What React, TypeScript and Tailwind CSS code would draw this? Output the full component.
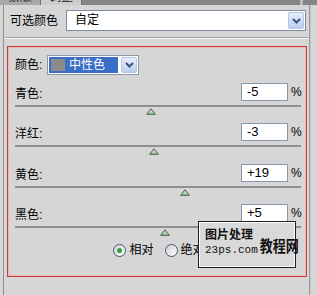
import React from 'react';

const rows = [
  { label: '青色:', value: -5, extra: '' },
  { label: '洋红:', value: -3, extra: '' },
  { label: '黄色:', value: 19, extra: 'mt-px' },
  { label: '黑色:', value: 5, extra: '' },
];

function Chevron() {
  return (
    <svg width="9" height="6" viewBox="0 0 9 6">
      <polyline points="1,1 4.5,4.5 8,1" fill="none" stroke="#3d5585" strokeWidth="2" />
    </svg>
  );
}

function DropButton() {
  return (
    <div className="w-[16px] h-full flex items-center justify-center border border-[#b6c6e4] bg-gradient-to-b from-[#e6edfb] to-[#bccdee] rounded-[2px]">
      <Chevron />
    </div>
  );
}

function Thumb() {
  return (
    <svg width="10" height="7" viewBox="0 0 10 7">
      <defs>
        <linearGradient id="tg" x1="0" y1="0" x2="0" y2="1">
          <stop offset="0" stopColor="#e6f2e6" />
          <stop offset="1" stopColor="#9cc09c" />
        </linearGradient>
      </defs>
      <polygon points="5,0.8 9.3,6.3 0.7,6.3" fill="url(#tg)" stroke="#3f5f46" strokeWidth="1" />
    </svg>
  );
}

function Radio({ label, checked }: { label: string; checked?: boolean }) {
  return (
    <div className="flex items-center gap-[3px]">
      <div className="w-[13px] h-[13px] rounded-full border border-[#3f5872] bg-gradient-to-br from-[#d2d2d2] to-white flex items-center justify-center">
        {checked && <div className="w-[5px] h-[5px] rounded-full bg-[#35a33d]" />}
      </div>
      <span className="text-[12px] leading-[14px] text-black">{label}</span>
    </div>
  );
}

export default function App() {
  return (
    <div className="relative w-[317px] h-[295px] overflow-hidden bg-[#d6d6d6] text-black font-['Liberation_Sans','Noto_Sans_CJK_SC',sans-serif]">
      {/* 标签栏 */}
      <div className="h-[5px] flex bg-[#858585] overflow-hidden">
        <div className="w-[41px] bg-[#a9a9a9] border-r border-[#6e6e6e] overflow-hidden">
          <div className="mt-[-10px] pl-[8px] text-[12px] leading-[14px] text-[#333]">蒙版</div>
        </div>
        <div className="w-[41px] bg-[#cdcdcd] border-r border-[#6e6e6e] overflow-hidden">
          <div className="mt-[-10px] pl-[8px] text-[12px] leading-[14px] text-[#222]">调整</div>
        </div>
        <div className="flex-1" />
        <div className="w-[3px] bg-[#bdbdbd] mr-[14px]" />
      </div>

      <div className="flex h-[290px]">
        <div className="w-[3px]" />
        <div className="w-px bg-[#8f8f8f]" />

        <div className="w-[305px] flex flex-col">
          {/* 可选颜色 */}
          <div className="flex items-center pt-[5px] pl-[6px]">
            <div className="w-[56px] text-[12px] leading-[14px]">可选颜色</div>
            <div className="w-[240px] h-[21px] flex border border-[#7f8d9c] bg-white p-px">
              <div className="flex-1 pl-[7px] text-[12px] leading-[17px]">自定</div>
              <DropButton />
            </div>
          </div>

          <div className="mt-[6px] ml-px h-px bg-[#a3a3a3]" />
          <div className="ml-px h-px bg-[#f4f4f4]" />

          {/* 红框 */}
          <div className="mt-[7px] ml-[3px] w-[300px] h-[231px] border border-[#c93a3a] shadow-[inset_0_0_0_1px_#ecb7b7] pl-[7px] pr-[5px] pt-[8px]">
            <div className="flex items-center">
              <div className="w-[32px] text-[12px] leading-[14px]">颜色:</div>
              <div className="w-[92px] h-[20px] flex border border-[#8a98a8] bg-white p-px gap-[3px]">
                <div className="w-[69px] bg-[#3b6ec7] flex items-center pl-[2px] gap-[4px]">
                  <div className="w-[14px] h-[12px] bg-[#8b8b8b]" />
                  <span className="text-white text-[12px] leading-[14px]">中性色</span>
                </div>
                <DropButton />
              </div>
            </div>

            <div className="mt-[8px] flex flex-col">
              {rows.map((r) => (
                <div key={r.label} className={`h-[40px] ${r.extra}`}>
                  <div className="flex items-end h-[18px]">
                    <div className="flex-1 text-[12px] leading-[13px]">{r.label}</div>
                    <div className="w-[47px] h-[18px] border border-[#8797a7] bg-white pl-[5px] text-[13px] leading-[16px]">
                      {r.value > 0 ? `+${r.value}` : r.value}
                    </div>
                    <div className="w-[13px] pl-[3px] text-[12px] leading-[15px] self-center">%</div>
                  </div>
                  <div className="mt-[4px] h-[2px] bg-[#8f8f8f]" />
                  <div className="relative h-[8px] mt-px">
                    <div
                      className="absolute top-0 -translate-x-1/2"
                      style={{ left: `${((r.value + 100) / 200) * 100}%` }}
                    >
                      <Thumb />
                    </div>
                  </div>
                </div>
              ))}
            </div>

            <div className="mt-[-1px] flex justify-center gap-[11px] pl-[2px]">
              <Radio label="相对" checked />
              <Radio label="绝对" />
            </div>
          </div>
        </div>

        <div className="w-px bg-[#9c9c9c]" />
        <div className="w-px bg-[#c4c4c4]" />
        <div className="flex-1" />
      </div>

      {/* 水印 */}
      <div className="absolute left-[198px] top-[221px] w-[98px] h-[47px] border border-[#1e1e1e] shadow-[inset_0_0_0_1px_#ffffff] bg-[#d9d9d9] flex items-end pl-[6px] pb-[11px] whitespace-nowrap">
        <div className="flex flex-col">
          <span className="text-[12px] leading-[13px] font-bold text-[#111]">图片处理</span>
          <span className="mt-[3px] text-[11px] leading-[11px] font-['Liberation_Mono',monospace] text-[#111]">23ps.com</span>
        </div>
        <span className="ml-[2px] text-[13px] leading-[15px] font-bold text-[#111] scale-y-[1.2] origin-bottom">教程网</span>
      </div>
    </div>
  );
}
